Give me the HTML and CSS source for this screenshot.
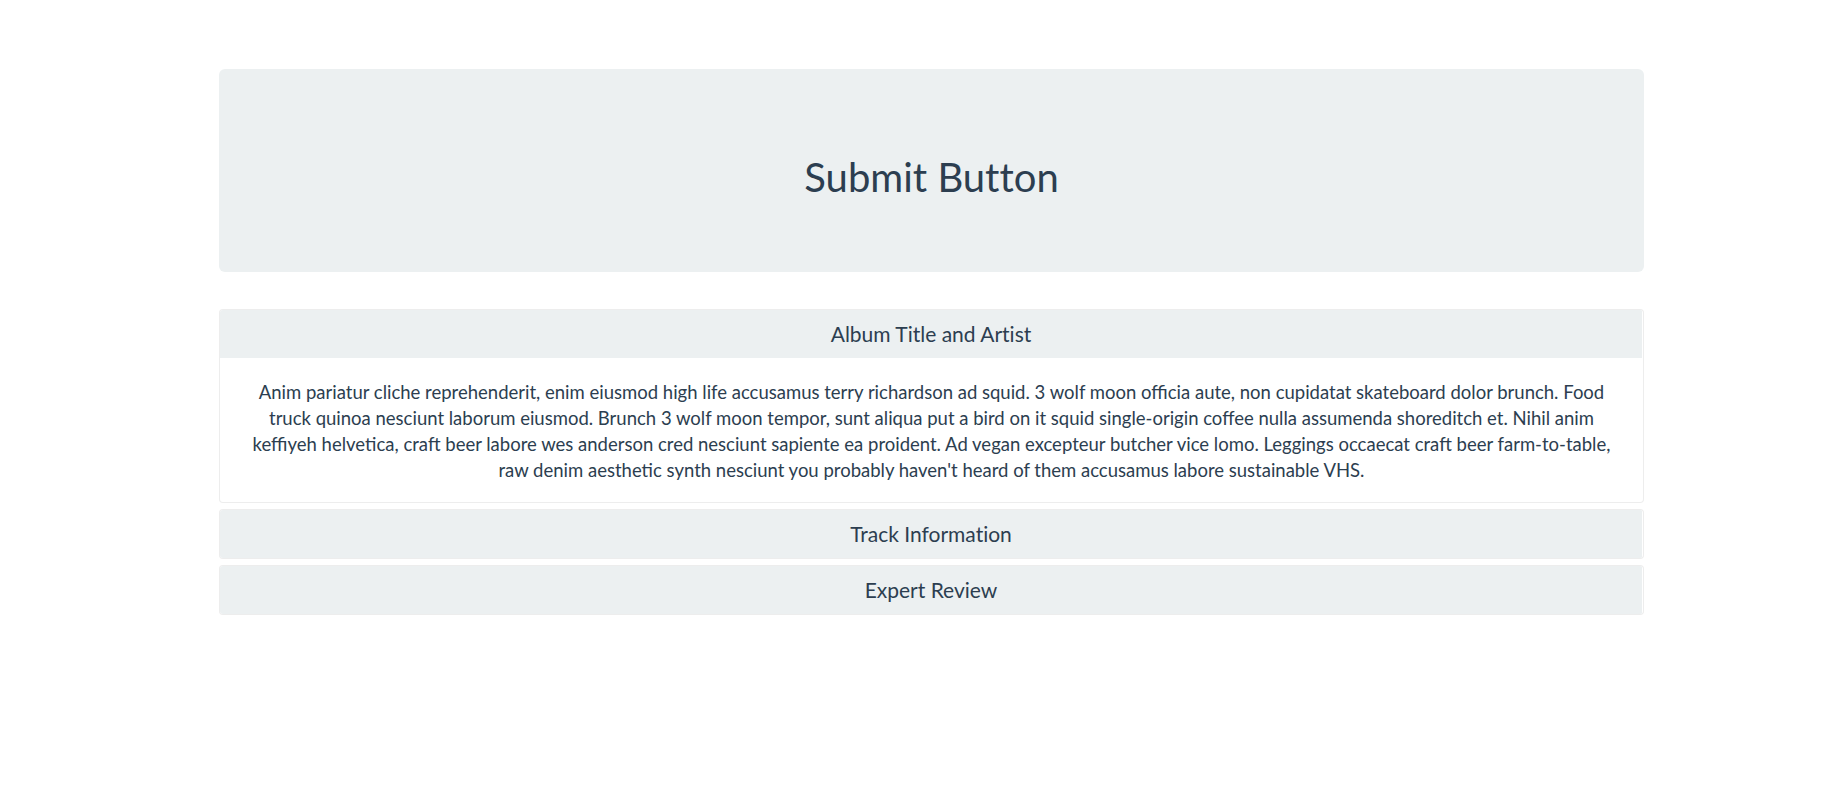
FILE: index.html
```html
<!DOCTYPE html>
<html lang="en">
<head>
<meta charset="utf-8">
<title>Submit Button</title>
<link rel="stylesheet" href="styles.css">
</head>
<body>
<main class="page">
  <section class="jumbotron">
    <h1 class="jumbo-title">Submit Button</h1>
  </section>
  <div class="accordion">
    <div class="card">
      <div class="card-header">Album Title and Artist</div>
      <div class="card-body">Anim pariatur cliche reprehenderit, enim eiusmod high life accusamus terry richardson ad squid. 3 wolf moon officia aute, non cupidatat skateboard dolor brunch. Food truck quinoa nesciunt laborum eiusmod. Brunch 3 wolf moon tempor, sunt aliqua put a bird on it squid single-origin coffee nulla assumenda shoreditch et. Nihil anim keffiyeh helvetica, craft beer labore wes anderson cred nesciunt sapiente ea proident. Ad vegan excepteur butcher vice lomo. Leggings occaecat craft beer farm-to-table, raw denim aesthetic synth nesciunt you probably haven't heard of them accusamus labore sustainable VHS.</div>
    </div>
    <div class="card">
      <div class="card-header">Track Information</div>
    </div>
    <div class="card">
      <div class="card-header">Expert Review</div>
    </div>
  </div>
</main>
</body>
</html>
```

FILE: styles.css
```css
html, body {
  margin: 0;
  padding: 0;
  background: #ffffff;
}
body {
  font-family: Lato, "Open Sans", "Liberation Sans", sans-serif;
  color: #2c3e50;
  font-size: 16px;
  line-height: 24px;
}
.page {
  width: 1425px;
  margin-left: 219px;
  padding-top: 69px;
}
.jumbotron {
  background: #ecf0f1;
  border-radius: 6px;
  height: 203px;
  box-sizing: border-box;
  display: flex;
  align-items: center;
  justify-content: center;
  padding-top: 13px;
  margin-bottom: 37px;
}
.jumbo-title {
  margin: 0;
  font-size: 40px;
  line-height: 48px;
  font-weight: 400;
  text-align: center;
  font-variant-ligatures: no-common-ligatures;
}
.accordion {
  display: flex;
  flex-direction: column;
  gap: 6px;
}
.card {
  border: 1px solid rgba(0, 0, 0, 0.07);
  border-radius: 4px;
  overflow: hidden;
  background: #fff;
}
.card-header {
  background: #ecf0f1;
  text-align: center;
  font-size: 21px;
  line-height: 24px;
  padding: 12px 20px;
  margin-right: 1px;
  font-variant-ligatures: no-common-ligatures;
}
.card-body {
  text-align: center;
  padding: 20.5px 20px 19px;
  font-size: 18.5px;
  line-height: 26.2px;
}
```
